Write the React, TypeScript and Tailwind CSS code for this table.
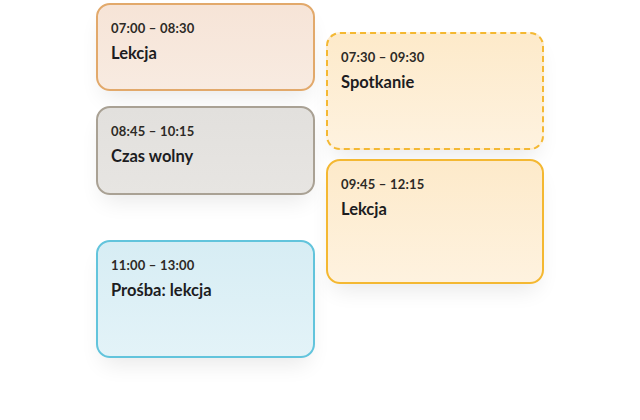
import React from "react";

type Slot = {
  time: string;
  title: string;
  tone: "peach" | "stone" | "sky" | "amber";
  dashed?: boolean;
  className: string;
};

const toneMap: Record<Slot["tone"], string> = {
  peach: "border-[#e2a96b] from-[#f6e4d7] to-[#f8ebe1]",
  stone: "border-[#a9a194] from-[#e2e0dd] to-[#e7e5e2]",
  sky: "border-[#62c4dc] from-[#d7edf4] to-[#e3f3f8]",
  amber: "border-[#f4b832] from-[#fdeaca] to-[#fef2df]",
};

const LEFT: Slot[] = [
  { time: "07:00 – 08:30", title: "Lekcja", tone: "peach", className: "mt-[3px] h-[88px]" },
  { time: "08:45 – 10:15", title: "Czas wolny", tone: "stone", className: "mt-[15px] h-[89px]" },
  { time: "11:00 – 13:00", title: "Prośba: lekcja", tone: "sky", className: "mt-[45px] h-[118px]" },
];

const RIGHT: Slot[] = [
  { time: "07:30 – 09:30", title: "Spotkanie", tone: "amber", dashed: true, className: "mt-[32px] h-[118px]" },
  { time: "09:45 – 12:15", title: "Lekcja", tone: "amber", className: "mt-[9px] h-[125px]" },
];

function SlotCard({ slot }: { slot: Slot }) {
  return (
    <div
      className={`rounded-[14px] border-2 bg-linear-to-b px-[13px] pt-[15px] shadow-[0_12px_22px_-6px_rgba(0,0,0,0.09)] ${
        slot.dashed ? "border-dashed" : "border-solid"
      } ${toneMap[slot.tone]} ${slot.className}`}
    >
      <div className="text-[13px] font-bold leading-4 tracking-[0.2px] text-[#2d2a26]">{slot.time}</div>
      <div className="mt-[7px] text-[16.5px] font-bold leading-5 text-[#1d1d1f]">{slot.title}</div>
    </div>
  );
}

export default function App() {
  return (
    <div className="h-[420px] w-[640px] bg-white font-['Lato','Noto_Sans',sans-serif]">
      <div className="flex gap-[11px] pl-[96px]">
        <div className="flex w-[219px] flex-col">
          {LEFT.map((slot, i) => (
            <SlotCard key={i} slot={slot} />
          ))}
        </div>
        <div className="flex w-[218px] flex-col">
          {RIGHT.map((slot, i) => (
            <SlotCard key={i} slot={slot} />
          ))}
        </div>
      </div>
    </div>
  );
}
